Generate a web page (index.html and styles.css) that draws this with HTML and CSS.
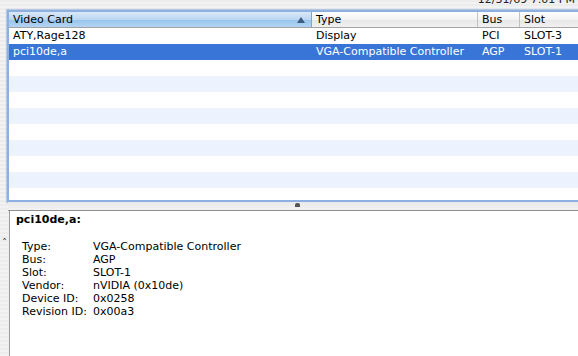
FILE: index.html
```html
<!DOCTYPE html>
<html lang="en">
<head>
    <meta charset="UTF-8">
    <title>System Profiler - Video Card</title>
    <link rel="stylesheet" href="styles.css">
</head>
<body>
    <div class="topbar">
        <span class="clock">12/31/69 7:01 PM</span>
    </div>

    <div class="list">
        <div class="row header">
            <div class="cell sorted">Video Card <span class="arrow"></span></div>
            <div class="cell">Type</div>
            <div class="cell">Bus</div>
            <div class="cell">Slot</div>
        </div>
        <div class="row">
            <div class="cell">ATY,Rage128</div>
            <div class="cell">Display</div>
            <div class="cell">PCI</div>
            <div class="cell">SLOT-3</div>
        </div>
        <div class="row selected">
            <div class="cell">pci10de,a</div>
            <div class="cell">VGA-Compatible Controller</div>
            <div class="cell">AGP</div>
            <div class="cell">SLOT-1</div>
        </div>
        <div class="row"></div>
        <div class="row alt"></div>
        <div class="row"></div>
        <div class="row alt"></div>
        <div class="row"></div>
        <div class="row alt"></div>
        <div class="row"></div>
        <div class="row alt"></div>
        <div class="row"></div>
    </div>

    <div class="splitter"><span class="handle"></span></div>

    <div class="lower">
        <div class="gutter"><span class="caret">&#710;</span></div>
        <div class="detail">
            <h2>pci10de,a:</h2>
            <dl class="props">
                <dt>Type:</dt><dd>VGA-Compatible Controller</dd>
                <dt>Bus:</dt><dd>AGP</dd>
                <dt>Slot:</dt><dd>SLOT-1</dd>
                <dt>Vendor:</dt><dd>nVIDIA (0x10de)</dd>
                <dt>Device ID:</dt><dd>0x0258</dd>
                <dt>Revision ID:</dt><dd>0x00a3</dd>
            </dl>
        </div>
    </div>
</body>
</html>
```

FILE: styles.css
```css
* {
    margin: 0;
    padding: 0;
    box-sizing: border-box;
}

html, body {
    width: 578px;
    height: 356px;
    overflow: hidden;
}

body {
    font-family: "DejaVu Sans", Verdana, sans-serif;
    font-size: 11px;
    color: #000;
    background: repeating-linear-gradient(to bottom, #ececec 0, #ececec 2px, #f2f2f2 2px, #f2f2f2 4px);
    display: flex;
    flex-direction: column;
}

.topbar {
    height: 10px;
    overflow: hidden;
    display: flex;
    justify-content: flex-end;
    padding-right: 3px;
}

.clock {
    line-height: 10px;
    margin-top: -5px;
    color: #222;
}

.list {
    margin-left: 7px;
    width: 590px;
    height: 192px;
    border: 2px solid #8cb0e0;
    box-shadow: 0 0 1px 1px rgba(120, 160, 215, 0.45);
    background: #fff;
    overflow: hidden;
}

.row {
    display: grid;
    grid-template-columns: 303px 166px 42px 1fr;
    height: 16px;
    line-height: 16px;
}

.row.alt {
    background: #edf3fe;
}

.row.selected {
    background: #3875d7;
    color: #fff;
}

.cell {
    padding-left: 4px;
    white-space: nowrap;
    overflow: hidden;
}

.header {
    background: linear-gradient(#fefefe, #f3f3f3 50%, #e6e6e6 51%, #f1f1f1);
    border-bottom: 1px solid #a3a3a3;
    line-height: 15px;
}

.header .cell {
    border-right: 1px solid #c2c2c2;
}

.header .cell.sorted {
    position: relative;
    background: linear-gradient(#dbe9f8, #bad6f2 50%, #97c3ec 51%, #b3d4f3);
    border-right-color: #7ea6d3;
}

.arrow {
    position: absolute;
    right: 6px;
    top: 5px;
    width: 0;
    height: 0;
    border-left: 4px solid transparent;
    border-right: 4px solid transparent;
    border-bottom: 6px solid #3e5b80;
}

.splitter {
    margin-left: 8px;
    height: 9px;
    background: linear-gradient(#e9e9e9, #f2f2f2);
    border-bottom: 1px solid #8f8f8f;
    display: flex;
    justify-content: center;
    padding-left: 8px;
}

.handle {
    width: 5px;
    height: 4px;
    margin-top: 1px;
    border-radius: 2px 2px 0 0;
    background: #555;
}

.lower {
    flex: 1;
    display: flex;
}

.gutter {
    width: 9px;
    position: relative;
}

.caret {
    position: absolute;
    left: 2px;
    top: 27px;
    font-size: 10px;
    color: #333;
}

.detail {
    flex: 1;
    background: #fff;
    border-left: 1px solid #9c9c9c;
    padding: 2px 0 0 6px;
}

.detail h2 {
    font-size: 11px;
    font-weight: bold;
    line-height: 13px;
    margin-bottom: 14px;
}

.props {
    display: grid;
    grid-template-columns: 71px 1fr;
    padding-left: 6px;
    line-height: 13px;
}
```
